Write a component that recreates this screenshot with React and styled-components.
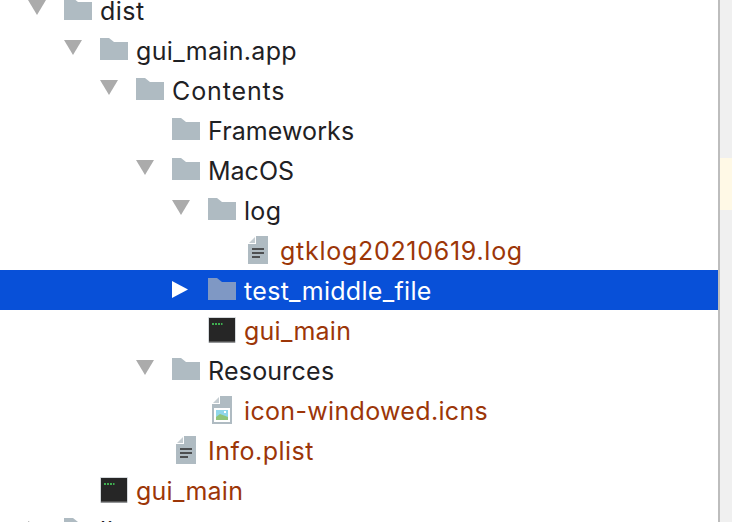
import React from "react";
import styled, { createGlobalStyle } from "styled-components";

const Global = createGlobalStyle`
  html, body { margin: 0; padding: 0; background: #fff; }
  body { width: 732px; height: 522px; overflow: hidden; }
`;

const Window = styled.div`
  display: flex;
  width: 732px;
  height: 522px;
  overflow: hidden;
  font-family: Inter, "Liberation Sans", sans-serif;
`;

const TreePane = styled.div`
  width: 718px;
  height: 522px;
  overflow: hidden;
  background: #fff;
`;

const Tree = styled.ul`
  list-style: none;
  margin: -10px 0 0;
  padding: 0;
`;

const Row = styled.li`
  display: flex;
  align-items: center;
  height: 40px;
  padding-left: ${(p) => 28 + p.$level * 36}px;
  background: ${(p) => (p.$selected ? "#0850d8" : "transparent")};
`;

const ArrowSlot = styled.span`
  display: flex;
  align-items: center;
  width: 36px;
  height: 40px;
  flex: none;
  padding-bottom: ${(p) => (p.$open ? 5 : 1)}px;
  box-sizing: border-box;
`;

const IconSlot = styled.span`
  display: flex;
  align-items: center;
  width: 36px;
  height: 40px;
  flex: none;
  box-sizing: border-box;
  padding-left: ${(p) => (p.$file ? 4 : 0)}px;
  padding-bottom: ${(p) => (p.$folder ? 2 : 0)}px;
`;

const Label = styled.span`
  font-size: 25px;
  line-height: 40px;
  margin-top: 2px;
  white-space: nowrap;
  letter-spacing: ${(p) => p.$track}px;
  color: ${(p) => (p.$selected ? "#ffffff" : p.$changed ? "#9c3608" : "#1f2124")};
`;

const Divider = styled.div`
  width: 2px;
  height: 522px;
  background: #bdbdbd;
  flex: none;
`;

const Gutter = styled.div`
  flex: 1;
  height: 522px;
  background: #f0f0f0;
  padding-top: 158px;
  box-sizing: border-box;
`;

const Marker = styled.div`
  height: 52px;
  background: #fff9e6;
`;

const Arrow = ({ open, selected }) =>
  open ? (
    <svg width="18" height="15" viewBox="0 0 18 15"><path d="M0 0h18L9 15z" fill="#ababab" /></svg>
  ) : (
    <svg width="16" height="17" viewBox="0 0 16 17"><path d="M0 0l16 8.5L0 17z" fill={selected ? "#fff" : "#ababab"} /></svg>
  );

const Folder = ({ selected }) => (
  <svg width="28" height="22" viewBox="0 0 28 22">
    <path d="M0 0h9l5 4h14v18H0z" fill={selected ? "#7f98c4" : "#afbbc2"} />
  </svg>
);

const TextFile = () => (
  <svg width="20" height="28" viewBox="0 0 20 28">
    <path d="M8 0h12v28H0V8h8z" fill="#afbbc2" />
    <path d="M7 1v6H1z" fill="#c5cdd2" />
    <path d="M4 12h12v2H4zM4 16h12v2H4zM4 20h8v2H4z" fill="#4d4f51" />
  </svg>
);

const ImageFile = () => (
  <svg width="20" height="28" viewBox="0 0 20 28">
    <path d="M8 0h12v28H0V8h8z" fill="#afbbc2" />
    <path d="M7 1v6H1z" fill="#c5cdd2" />
    <rect x="2" y="12" width="16" height="14" fill="#fff" />
    <rect x="4" y="14" width="12" height="10" fill="#8fd6ea" />
    <path d="M4 21l4-3 8 3v3H4z" fill="#8fc47a" />
    <rect x="12" y="15" width="2" height="2" fill="#fff" />
  </svg>
);

const Terminal = () => (
  <svg width="28" height="26" viewBox="0 0 28 26">
    <rect x="0" y="0" width="28" height="26" rx="1" fill="#d5d9dc" />
    <rect x="1" y="1" width="26" height="24" fill="#262626" />
    <rect x="1" y="24" width="26" height="1.5" fill="#555" />
    <path d="M4 6h2v2H4zM7 6h2v2H7zM10 6h2v2h-2zM13 6h1.5v2H13z" fill="#3fae50" />
  </svg>
);

const rows = [
  { level: 0, open: true, icon: "folder", text: "dist", track: 0.5 },
  { level: 1, open: true, icon: "folder", text: "gui_main.app", track: 0.33 },
  { level: 2, open: true, icon: "folder", text: "Contents", track: 0.87 },
  { level: 3, icon: "folder", text: "Frameworks", track: 0.1 },
  { level: 3, open: true, icon: "folder", text: "MacOS", track: 0 },
  { level: 4, open: true, icon: "folder", text: "log", track: 0.3 },
  { level: 5, icon: "text", text: "gtklog20210619.log", changed: true, track: 0.72 },
  { level: 4, closed: true, icon: "folder", text: "test_middle_file", selected: true, track: 0.31 },
  { level: 4, icon: "terminal", text: "gui_main", changed: true, track: 0.25 },
  { level: 3, open: true, icon: "folder", text: "Resources", track: 0.22 },
  { level: 4, icon: "image", text: "icon-windowed.icns", changed: true, track: 0.33 },
  { level: 3, icon: "text", text: "Info.plist", changed: true, track: 0.5 },
  { level: 1, icon: "terminal", text: "gui_main", changed: true, track: 0.25 },
  { level: 0, closed: true, icon: "folder", text: "li", track: 1 },
];

const icons = { folder: Folder, text: TextFile, image: ImageFile, terminal: Terminal };

export default function App() {
  return (
    <Window>
      <Global />
      <TreePane>
        <Tree>
          {rows.map((r, i) => {
            const Icon = icons[r.icon];
            return (
              <Row key={i} $level={r.level} $selected={r.selected}>
                <ArrowSlot $open={r.open}>{(r.open || r.closed) && <Arrow open={r.open} selected={r.selected} />}</ArrowSlot>
                <IconSlot $file={r.icon === "text" || r.icon === "image"} $folder={r.icon === "folder"}>
                  <Icon selected={r.selected} />
                </IconSlot>
                <Label $selected={r.selected} $changed={r.changed} $track={r.track}>{r.text}</Label>
              </Row>
            );
          })}
        </Tree>
      </TreePane>
      <Divider />
      <Gutter><Marker /></Gutter>
    </Window>
  );
}
